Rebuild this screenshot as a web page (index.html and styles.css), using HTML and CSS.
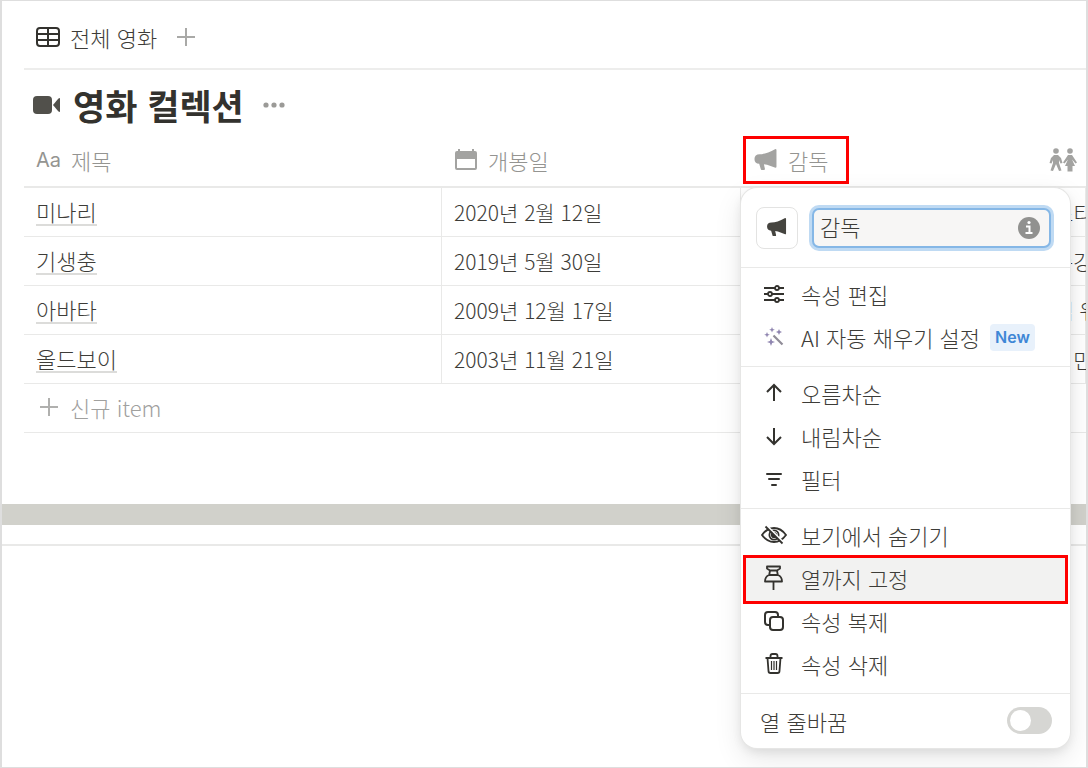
FILE: index.html
```html
<!DOCTYPE html>
<html lang="ko">
<head>
  <meta charset="UTF-8">
  <meta name="viewport" content="width=device-width,initial-scale=1">
  <title>영화 컬렉션</title>
  <link rel="stylesheet" href="styles.css">
</head>
<body>
  <div class="page">
    <div class="db">
      <nav class="tabs">
        <a href="#" class="tab">
          <svg width="24" height="20" viewBox="0 0 24 20" fill="none" stroke="#33322e" stroke-width="2"><rect x="1" y="1" width="22" height="18" rx="3"/><path d="M1 7h22M1 13h22M12 1v18"/></svg>
          전체 영화
        </a>
        <button class="icon-btn" aria-label="보기 추가">
          <svg width="18" height="18" viewBox="0 0 18 18" stroke="#a9a9a7" stroke-width="2"><path d="M9 0v18M0 9h18"/></svg>
        </button>
      </nav>

      <header class="title">
        <svg width="28" height="18" viewBox="0 0 28 18" fill="#51504b"><rect x="0" y="0" width="19" height="18" rx="4"/><path d="M20 9l5-6q2-2 2 0v12q0 2-2 0z"/></svg>
        <h1>영화 컬렉션</h1>
        <button class="icon-btn" aria-label="더 보기">
          <svg width="22" height="6" viewBox="0 0 22 6" fill="#9b9a97"><circle cx="3" cy="3" r="2.6"/><circle cx="11" cy="3" r="2.6"/><circle cx="19" cy="3" r="2.6"/></svg>
        </button>
      </header>

      <table>
        <colgroup><col class="c-name"><col class="c-date"><col class="c-director"><col></colgroup>
        <thead>
          <tr>
            <th><div class="head"><span class="aa">Aa</span>제목</div></th>
            <th><div class="head">
              <svg width="24" height="22" viewBox="0 0 24 22" fill="#a3a3a1"><path fill-rule="evenodd" d="M3 2h1V0h2v2h12V0h2v2h1q2 0 2 2v15q0 2-2 2H3q-2 0-2-2V4q0-2 2-2zM3 10v9h18v-9z"/></svg>
              개봉일
            </div></th>
            <th class="director">
              <button class="head marked">
                <svg width="24" height="22" viewBox="0 0 22 21" fill="#a3a3a1"><path d="M20 0q1 0 1 1v16q0 1-1 1l-8-3-3-.5L10 19q0 1-1 1H7q-1 0-1-1l-1.500-5Q0 14 0 9.500T5 5q6 0 15-5z"/></svg>
                감독
              </button>

              <div class="menu">
                <div class="menu-top">
                  <button class="emoji" aria-label="아이콘 변경">
                    <svg width="20" height="19" viewBox="0 0 22 21" fill="#45443f"><path d="M20 0q1 0 1 1v16q0 1-1 1l-8-3-3-.5L10 19q0 1-1 1H7q-1 0-1-1l-1.500-5Q0 14 0 9.500T5 5q6 0 15-5z"/></svg>
                  </button>
                  <div class="field">
                    <input type="text" value="감독" aria-label="속성 이름">
                    <svg width="22" height="22" viewBox="0 0 22 22"><circle cx="11" cy="11" r="11" fill="#91918f"/><circle cx="11" cy="5.500" r="1.600" fill="#fff"/><path d="M8 9.500h3.500V16M7.500 16h7" fill="none" stroke="#fff" stroke-width="2"/></svg>
                  </div>
                </div>

                <div class="group">
                  <button class="item">
                    <svg width="26" height="26" viewBox="0 0 26 26" fill="none" stroke="#33322e" stroke-width="1.800"><path d="M3 7h11M18 7h5M3 13h4M11 13h12M3 19h11M18 19h5"/><circle cx="16" cy="7" r="2"/><circle cx="9" cy="13" r="2"/><circle cx="16" cy="19" r="2"/></svg>
                    속성 편집
                  </button>
                  <button class="item">
                    <svg width="26" height="26" viewBox="0 0 26 26" fill="#8f85b0"><path d="M12.500 11.500l9 9" stroke="#908c98" stroke-width="2.200"/><path d="M11 3l.8 2 2 .8-2 .8-.8 2-.8-2-2-.8 2-.8zM18 5l.9 2.100 2.100.9-2.100.9-.9 2.100-.9-2.100-2.100-.9 2.100-.9zM6 8l.8 2 2 .8-2 .8-.8 2-.8-2-2-.8 2-.8zM10 14l1.100 2.900 2.900 1.100-2.900 1.100-1.100 2.900-1.100-2.900-2.900-1.100 2.900-1.100z"/></svg>
                    AI 자동 채우기 설정
                    <span class="new">New</span>
                  </button>
                </div>

                <div class="group">
                  <button class="item">
                    <svg width="26" height="26" viewBox="0 0 26 26" fill="none" stroke="#33322e" stroke-width="2"><path d="M13 21V5M6 12l7-7 7 7"/></svg>
                    오름차순
                  </button>
                  <button class="item">
                    <svg width="26" height="26" viewBox="0 0 26 26" fill="none" stroke="#33322e" stroke-width="2"><path d="M13 5v16M6 14l7 7 7-7"/></svg>
                    내림차순
                  </button>
                  <button class="item">
                    <svg width="26" height="26" viewBox="0 0 26 26" fill="none" stroke="#33322e" stroke-width="2" stroke-linecap="round"><path d="M6 8h14M8 13h10M11 19h4"/></svg>
                    필터
                  </button>
                </div>

                <div class="group">
                  <button class="item">
                    <svg width="26" height="26" viewBox="0 0 26 26" fill="none" stroke="#33322e" stroke-width="1.800"><path d="M1 13q5-7 12-7t12 7q-5 7-12 7T1 13z"/><circle cx="13" cy="13" r="4.600"/><circle cx="13" cy="13" r="2.200" fill="#33322e"/><path d="M6 4l17 17" stroke="#fff" stroke-width="2"/><path d="M4.500 4.500l17 17"/></svg>
                    보기에서 숨기기
                  </button>
                  <button class="item marked">
                    <svg width="26" height="26" viewBox="0 0 26 26" fill="none" stroke="#33322e" stroke-width="1.800" stroke-linejoin="round"><path d="M6 1.500h13v2l-3 2 .8 4.500q4.200 1.500 4.200 6.500H4q0-5 4.200-6.500L9 5.500l-3-2zM9 5.500h7M8.200 10h8.600M12.500 16.500V25"/></svg>
                    열까지 고정
                  </button>
                  <button class="item">
                    <svg width="26" height="26" viewBox="0 0 26 26" fill="none" stroke="#33322e" stroke-width="2"><rect x="9" y="9" width="13" height="13" rx="3"/><path d="M9 17H7q-3 0-3-3V7q0-3 3-3h7q3 0 3 3v2"/></svg>
                    속성 복제
                  </button>
                  <button class="item">
                    <svg width="26" height="26" viewBox="0 0 26 26" fill="none" stroke="#33322e" stroke-width="1.800"><path d="M4.500 7h17M9.500 7V5q0-2 2-2h3q2 0 2 2v2M6.500 7l1 13q0 2 2 2h7q2 0 2-2l1-13"/><path d="M10.500 10v9M13 10v9M15.500 10v9" stroke-width="1.200"/></svg>
                    속성 삭제
                  </button>
                </div>

                <label class="wrap-row">
                  열 줄바꿈
                  <input type="checkbox" class="toggle">
                </label>
              </div>
            </th>
            <th><div class="head">
              <svg width="28" height="24" viewBox="0 0 28 24" fill="#a3a3a1"><circle cx="7" cy="3" r="2.800"/><circle cx="21" cy="3" r="2.800"/><path d="M5 7h4l3 3 1.500 5-2 .5L10 12v3l2.500 7.500-2.500.5-3-7-3 7-2.500-.5L4 15v-3l-1.500 3.500-2-.5L2 10z"/><path d="M19 7h4l5 7.500-1.500 1-3.500-4 3 6.500h-2.500v5.500h-5V18H16l3-6.500-3.500 4-1.500-1z"/></svg>
              출연
            </div></th>
          </tr>
        </thead>
        <tbody>
          <tr><td><a href="#">미나리</a></td><td>2020년 2월 12일</td><td></td><td>스티븐 연</td></tr>
          <tr><td><a href="#">기생충</a></td><td>2019년 5월 30일</td><td></td><td>송강호</td></tr>
          <tr><td><a href="#">아바타</a></td><td>2009년 12월 17일</td><td></td><td>샘 워싱턴</td></tr>
          <tr><td><a href="#">올드보이</a></td><td>2003년 11월 21일</td><td></td><td>최민식</td></tr>
        </tbody>
      </table>

      <button class="add-row">
        <svg width="18" height="18" viewBox="0 0 18 18" stroke="#b0b0ae" stroke-width="2"><path d="M9 0v18M0 9h18"/></svg>
        신규 item
      </button>
    </div>

    <div class="scrollbar"></div>
    <div class="footer-line"></div>
  </div>
</body>
</html>
```
FILE: styles.css
```css
:root {
  --fg: #3d3c38;
  --muted: #949491;
  --line: #e9e9e8;
  --mark: #fe0000;
}
* { box-sizing: border-box; }
body {
  margin: 0;
  font-family: "Noto Sans CJK KR", sans-serif;
  font-size: 22px;
  font-weight: 300;
  line-height: 32px;
  color: var(--fg);
  background: #fff;
}
button, input { font: inherit; color: inherit; }
button { border: 0; background: none; padding: 0; cursor: pointer; }
a { color: inherit; text-decoration: none; }
svg { flex: none; display: block; }

.page {
  min-height: 100vh;
  border: 2px solid #dedede;
  border-top-width: 1px;
  border-bottom-width: 1px;
  overflow: hidden;
}
.db { padding-left: 22px; }
.tabs {
  display: flex;
  align-items: center;
  gap: 20px;
  height: 69px;
  padding: 5px 12px 0;
  border-bottom: 2px solid #ededec;
}
.tab { display: flex; align-items: center; gap: 10px; }
.title {
  display: flex;
  align-items: center;
  gap: 12px;
  height: 68px;
  padding: 1px 0 0 9px;
}
.title h1 {
  margin: 0 7px 0 0;
  font-size: 35px;
  line-height: 48px;
  font-weight: 700;
  color: #33322e;
}

table {
  width: 100%;
  table-layout: fixed;
  border-collapse: separate;
  border-spacing: 0;
}
.c-name { width: 418px; }
.c-date { width: 299px; }
.c-director { width: 296px; }
th, td {
  height: 49px;
  padding: 0 12px;
  border-bottom: 1px solid var(--line);
  text-align: left;
  white-space: nowrap;
  font-weight: 300;
}
th { border-bottom-width: 2px; height: 50px; padding-bottom: 4px; color: var(--muted); }
td { font-size: 21px; border-right: 1px solid var(--line); }
td:last-child { padding-left: 17px; }
td a { font-size: 22px; line-height: 26px; display: inline-block; border-bottom: 2px solid #dcdcda; }
.head { display: flex; align-items: center; gap: 10px; height: 42px; }
.aa { font-family: Inter, sans-serif; font-weight: 400; font-size: 20px; }

.director { position: relative; padding-left: 5px; }
.director .head { padding: 0 18px 0 8px; }
.marked { outline: 3px solid var(--mark); }

.add-row {
  display: flex;
  align-items: center;
  gap: 12px;
  width: 100%;
  height: 49px;
  padding: 0 0 2px 16px;
  border-bottom: 1px solid var(--line);
  color: #a0a09e;
}
.scrollbar { height: 21px; margin-top: 71px; background: #d1d1cb; }
.footer-line { height: 21px; border-bottom: 2px solid var(--line); }

/* column menu */
.menu {
  position: absolute;
  top: 50px;
  left: 0;
  z-index: 2;
  width: 329px;
  background: #fff;
  border-radius: 16px;
  box-shadow: 0 0 0 1px #e6e6e5, 0 4px 10px rgba(0,0,0,0.08), 0 10px 28px rgba(0,0,0,0.1);
  color: var(--fg);
}
.menu-top {
  display: flex;
  align-items: center;
  gap: 14px;
  height: 80px;
  padding: 0 19px 0 15px;
  border-bottom: 1px solid var(--line);
}
.emoji {
  flex: none;
  display: grid;
  place-items: center;
  width: 42px;
  height: 42px;
  border: 1px solid #e3e3e2;
  border-radius: 8px;
}
.field {
  flex: 1;
  min-width: 0;
  display: flex;
  align-items: center;
  height: 40px;
  padding: 0 9px 0 6px;
  background: #f7f6f5;
  border: 2px solid #85b7e6;
  border-radius: 7px;
  box-shadow: 0 0 0 3px #bfdaf3;
}
.field input { flex: 1; min-width: 0; padding: 0 0 3px; border: 0; outline: 0; background: none; }
.group { padding: 6px 5px; border-bottom: 1px solid var(--line); }
.item {
  display: flex;
  align-items: center;
  gap: 14px;
  width: 100%;
  height: 43px;
  padding: 0 0 3px 15px;
}
.item.marked { background: #f2f2f1; }
.new {
  padding: 0 5px;
  margin-left: -4px;
  border-radius: 4px;
  background: #e8f1fb;
  color: #3f87d6;
  font: 600 16px/27px Inter, sans-serif;
}
.wrap-row {
  display: flex;
  align-items: center;
  justify-content: space-between;
  height: 54px;
  padding: 0 18px 1px 19px;
}
.toggle {
  appearance: none;
  display: flex;
  align-items: center;
  width: 45px;
  height: 27px;
  margin: 0;
  padding: 0 3px;
  border-radius: 14px;
  background: #d6d6d3;
}
.toggle::before {
  content: '';
  width: 21px;
  height: 21px;
  border-radius: 50%;
  background: #fff;
}
.toggle:checked { justify-content: flex-end; background: #2383e2; }
```
